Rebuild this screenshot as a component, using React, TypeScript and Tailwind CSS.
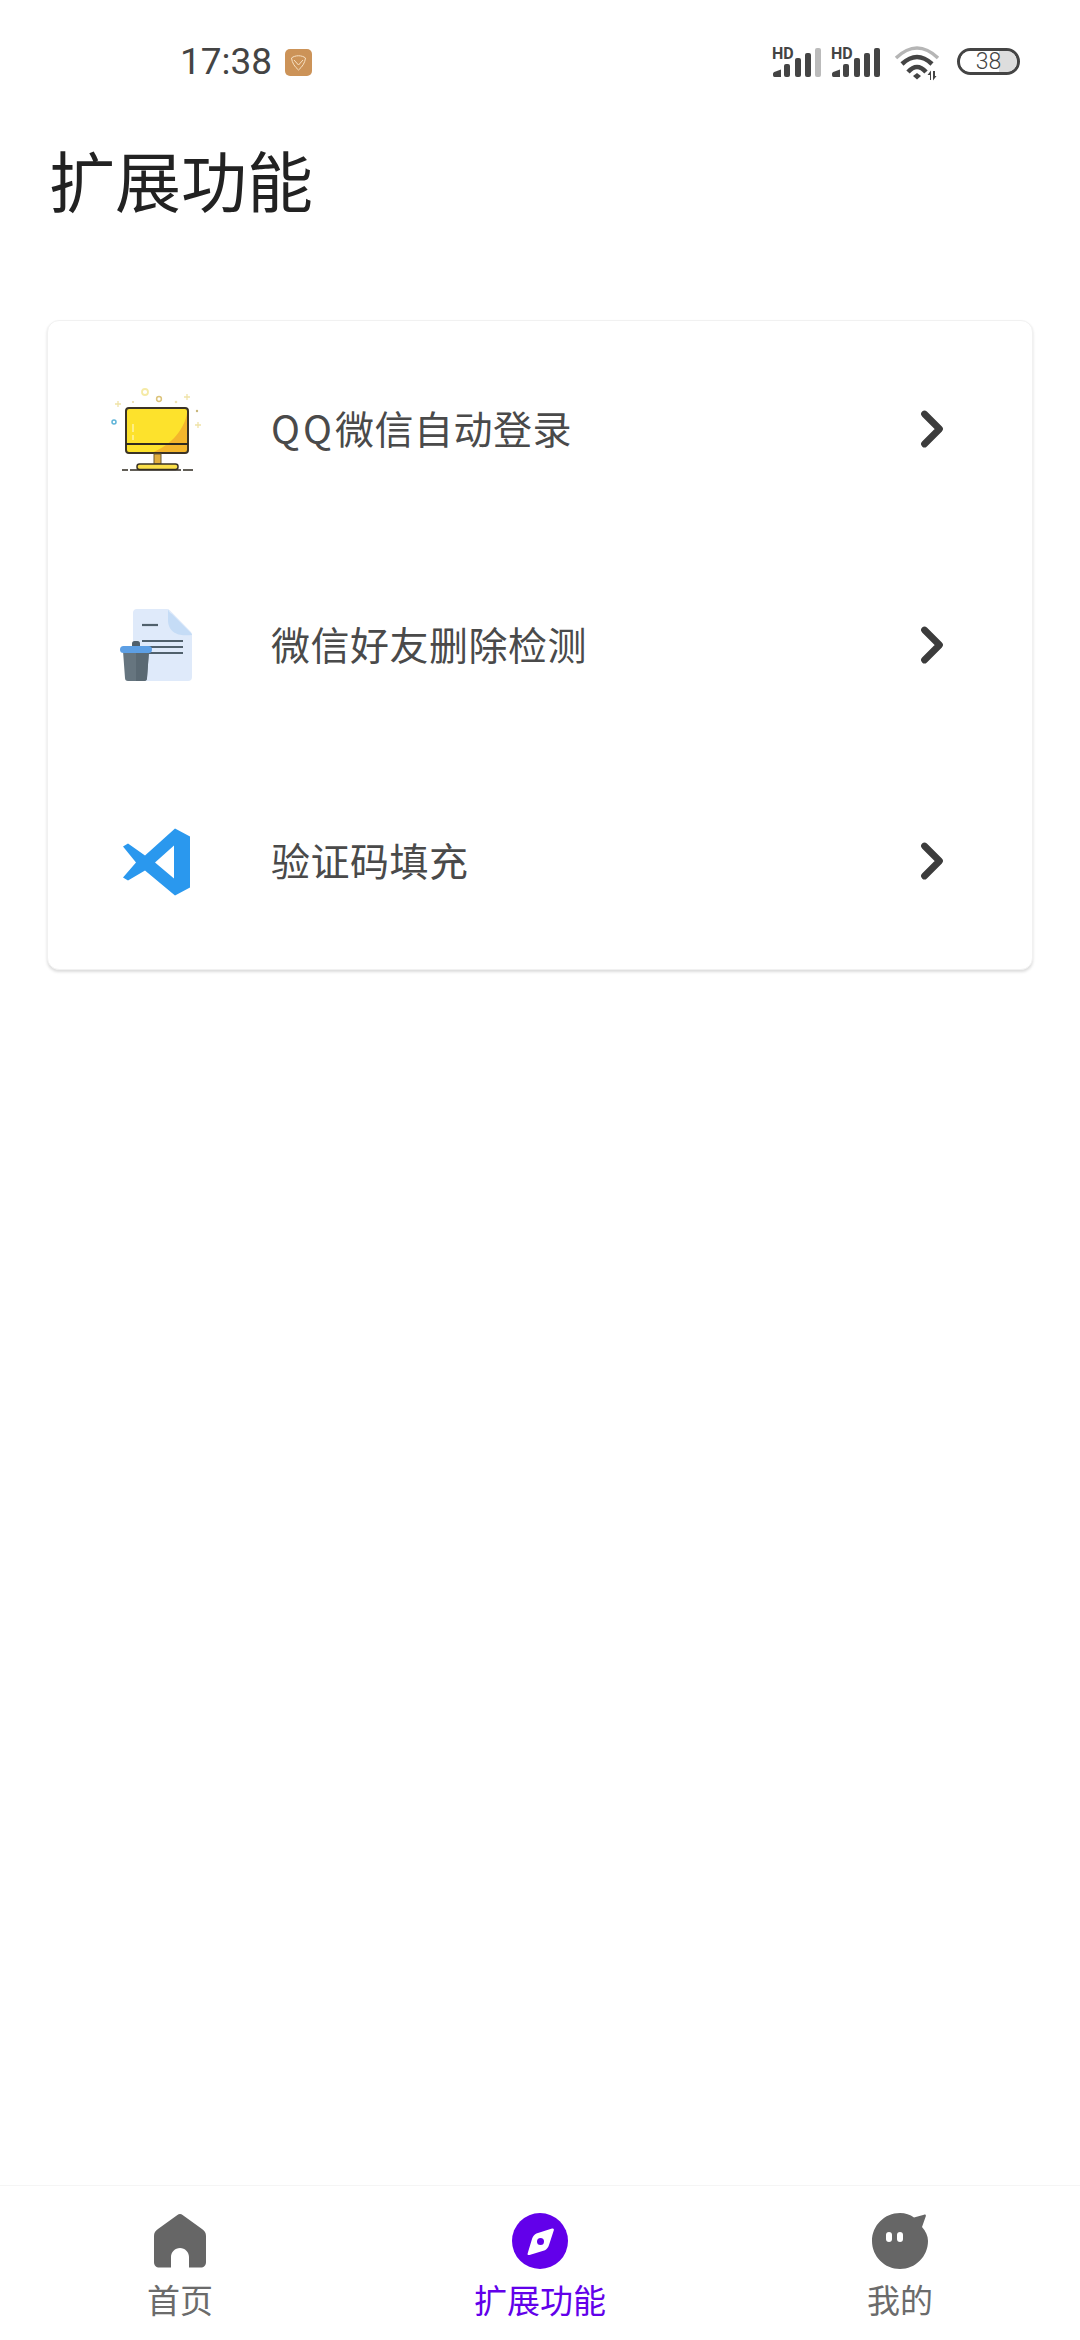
import type { ReactNode } from "react";
import { ChevronRight } from "lucide-react";

const rows = [
  { icon: <MonitorIcon />, text: <><span className="tracking-[3px]">QQ</span>微信自动登录</> },
  { icon: <FileTrashIcon />, text: "微信好友删除检测" },
  { icon: <CodeIcon />, text: "验证码填充" },
];

function MonitorIcon() {
  return (
    <svg width="96" height="96" viewBox="0 -2 96 96" fill="none" className="overflow-visible">
      <circle cx="45" cy="9" r="3" stroke="#f5eaa6" strokeWidth="1.8" />
      <circle cx="59" cy="16" r="2.400" stroke="#dcc37a" strokeWidth="1.500" />
      <path d="M18 18v6M15 21h6M87 11v6M84 14h6M98 39v6M95 42h6" stroke="#f0e3a8" strokeWidth="1.300" />
      <circle cx="33" cy="19" r="1" fill="#e8d9a0" />
      <circle cx="76" cy="19" r="1.300" fill="#f0e4b0" />
      <circle cx="97" cy="28" r="1.200" fill="#c9b77a" />
      <circle cx="14" cy="39" r="2" stroke="#5fb4d8" strokeWidth="1.500" />
      <rect x="26" y="25" width="62" height="45" rx="3" fill="#fde22c" />
      <path d="M87 30c-2 14-14 32-36 40h34l3-3z" fill="#f4b62c" />
      <path d="M33 41v8M33 52v5" stroke="#fff3a0" strokeWidth="1.500" />
      <rect x="26" y="25" width="62" height="45" rx="3" stroke="#3b3326" strokeWidth="2" />
      <path d="M26 61h62" stroke="#2f2a20" strokeWidth="2" />
      <rect x="54" y="71" width="7" height="10" fill="#e0ae3e" stroke="#6b5a30" strokeWidth="1" />
      <rect x="37" y="81" width="41" height="5.500" rx="2.500" fill="#fbe04a" stroke="#3b3326" strokeWidth="1.500" />
      <path d="M22 87h71" stroke="#2f2a20" strokeWidth="1.500" strokeDasharray="6 2 51 2 10" />
    </svg>
  );
}

function FileTrashIcon() {
  return (
    <svg width="96" height="96" viewBox="0 0 96 96" fill="none">
      <path d="M33 16a4 4 0 0 1 4-4h29c2 0 3 .5 4.500 2L90 34c1.500 1.500 2 2.500 2 4.500V80a4 4 0 0 1-4 4H37a4 4 0 0 1-4-4z" fill="#dfeafa" />
      <path d="M68 12c1 3 2 4 4 5l18 18c1 1 2 2 2 3-8 1-23 1-24-14z" fill="#c5dcf6" />
      <path d="M42 28h16" stroke="#50606c" strokeWidth="2.200" />
      <path d="M42 44h41M42 50h41M42 56h41" stroke="#50606c" strokeWidth="2" />
      <rect x="32" y="44" width="8" height="8" rx="2.500" fill="#50606c" />
      <path d="M23 54h26l-2 27a3 3 0 0 1-3 3H28a3 3 0 0 1-3-3z" fill="#66757f" />
      <path d="M36 54h13l-2 27a3 3 0 0 1-3 3h-8z" fill="#5a6973" />
      <rect x="20" y="49" width="32" height="7" rx="3.500" fill="#5d9fe4" />
    </svg>
  );
}

function CodeIcon() {
  return (
    <svg width="96" height="96" viewBox="0 -1.500 96 96" fill="none">
      <path
        d="M75 14 90 22V73L75 81 45 56 28 66 23 63 36 48 23 32 28 29 45 41zM74 31 55 48 74 64z"
        fill="#2a98ee"
        fillRule="evenodd"
      />
    </svg>
  );
}

function SignalIcon({ dim }: { dim?: boolean }) {
  return (
    <svg width="50" height="31" viewBox="0 0 50 31" fill="none" className="overflow-visible">
      <text x="0" y="11.500" fontFamily="Roboto, sans-serif" fontWeight="700" fontSize="16" fill="#444">
        HD
      </text>
      <path d="M1 27c0-1 .5-1.600 1.200-2.100L9 22.500V30H2.500C1.500 30 1 29 1 28z" fill="#444" />
      <rect x="12" y="17" width="6" height="13" rx="2" fill="#444" />
      <rect x="23" y="11" width="6" height="19" rx="2" fill="#444" />
      <rect x="33" y="6" width="6" height="24" rx="2" fill="#444" />
      <rect x="43" y="1" width="6" height="29" rx="2" fill={dim ? "#bbb" : "#444"} />
    </svg>
  );
}

function WifiIcon() {
  return (
    <svg width="46" height="35" viewBox="0 0 46 35" fill="none">
      <path d="M2 12Q23-8 44 12" stroke="#b5b5b5" strokeWidth="3.500" />
      <path d="M8 18Q23 4 38 18" stroke="#444" strokeWidth="4.500" />
      <path d="M14 26Q23 16 32 26" stroke="#444" strokeWidth="4.500" />
      <path d="M19 30l4-3 4 3-4 3.500z" fill="#444" />
      <path d="M36 34V29h-2.500l3.500-4.500V34zM39 25v9.500l3.500-4.500H41v-5z" fill="#444" />
    </svg>
  );
}

function HomeIcon() {
  return (
    <svg width="52" height="54" viewBox="0 0 52 54">
      <path
        d="M26 0c1 0 1.800.3 2.600 1L48 15c2.700 2 4 3.800 4 7v26c0 3.500-2 5.500-5.500 5.500H35V43c0-5-4-9-9-9s-9 4-9 9v10.500H5.500C2 53.500 0 51.500 0 48V22c0-3.200 1.300-5 4-7L23.400 1c.8-.7 1.600-1 2.600-1z"
        fill="#666"
      />
    </svg>
  );
}

function CompassIcon() {
  return (
    <svg width="56" height="56" viewBox="0 0 56 56">
      <circle cx="28" cy="28" r="28" fill="#6200ea" />
      <path
        d="M40 15.500c1.500-.4 2.200.4 1.800 1.800L37 32c-.8 2.500-2 4-4 5.200L17.500 42c-1.500.4-2.300-.4-1.800-1.800L20 26c.8-2.500 2.200-4.200 4.400-5.400z"
        fill="#fff"
      />
      <circle cx="28.500" cy="28.500" r="3.500" fill="#6200ea" />
    </svg>
  );
}

function ProfileIcon() {
  return (
    <svg width="56" height="56" viewBox="0 0 56 56" className="overflow-visible">
      <path
        d="M28 0c5.500 0 10 1.500 14 4.500l10-2.800c1.400-.4 2.200.3 1.800 1.600L50 14c3.800 4.500 6 8.500 6 14 0 15.500-12.500 28-28 28S0 43.500 0 28 12.500 0 28 0z"
        fill="#666"
      />
      <rect x="14" y="19" width="6" height="10" rx="3" fill="#fff" />
      <rect x="25" y="19" width="6" height="10" rx="3" fill="#fff" />
    </svg>
  );
}

function Tab({ icon, label, active }: { icon: ReactNode; label: string; active?: boolean }) {
  return (
    <div className="flex flex-1 flex-col items-center pt-[27px]">
      <div className="flex h-[56px] w-[56px] items-center justify-center">{icon}</div>
      <span className={`mt-[8px] text-[33px] leading-[44px] ${active ? "text-[#6200ea]" : "text-[#6b6b6b]"}`}>{label}</span>
    </div>
  );
}

export default function App() {
  return (
    <div className="flex h-[2340px] w-[1080px] flex-col bg-white font-['Noto_Sans_CJK_SC','Noto_Sans',sans-serif]">
      {/* status bar */}
      <div className="flex h-[124px] items-start justify-between pl-[180px] pr-[60px] pt-[42px]">
        <div className="flex items-center gap-[13px]">
          <span className="font-['Roboto',sans-serif] text-[37px] leading-[40px] text-[#444]">17:38</span>
          <div className="flex h-[27px] w-[27px] items-center justify-center rounded-[5px] bg-[#cc9358]">
            <svg width="17" height="17" viewBox="0 0 17 17" fill="none" stroke="#f8e2c4" strokeWidth="1">
              <path d="M1.500 4C5 1 12 1 15.500 4 15 9 12 13 8.500 16 5 13 2 9 1.500 4z" />
              <path d="M4 6l4.500 5L13 6" />
            </svg>
          </div>
        </div>
        <div className="flex items-start pt-[5px]">
          <SignalIcon dim />
          <div className="ml-[9px]">
            <SignalIcon />
          </div>
          <div className="ml-[13px] mt-[-1px]">
            <WifiIcon />
          </div>
          <div className="relative ml-[17px] mt-[1px] flex h-[27px] w-[63px] items-center justify-center overflow-hidden rounded-full border-[3px] border-[#444] font-['Roboto',sans-serif] text-[23px] font-light text-[#444]">
            <div className="absolute inset-0 bg-[linear-gradient(90deg,#fff_68%,#ddd_68%)]" />
            <span className="relative leading-none">38</span>
          </div>
        </div>
      </div>

      <h1 className="pl-[49px] pt-[9px] text-[66px] font-normal leading-[90px] text-[#222]">扩展功能</h1>

      {/* card */}
      <div className="mx-[47px] mt-[97px] rounded-[12px] border border-[#f1f1f1] bg-white shadow-[0_2px_3px_rgba(0,0,0,0.14)]">
        {rows.map((row, i) => (
          <div key={i} className="flex h-[216px] items-center pl-[52px] pr-[70px]">
            <div className="h-[96px] w-[96px] shrink-0">{row.icon}</div>
            <span className="ml-[75px] flex-1 pb-[4px] text-[39px] tracking-[0.5px] text-[#4a4a4a]">{row.text}</span>
            <ChevronRight size={60} strokeWidth={2.7} color="#3c3c3c" />
          </div>
        ))}
      </div>

      {/* tab bar */}
      <div className="mt-auto flex h-[155px] border-t border-[#f5f5f5]">
        <Tab icon={<HomeIcon />} label="首页" />
        <Tab icon={<CompassIcon />} label="扩展功能" active />
        <Tab icon={<ProfileIcon />} label="我的" />
      </div>
    </div>
  );
}
